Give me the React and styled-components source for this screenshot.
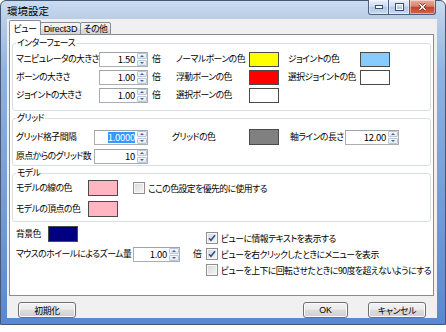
import React from "react";
import styled, { createGlobalStyle } from "styled-components";

const GlobalStyle = createGlobalStyle`
  html, body {
    margin: 0;
    padding: 0;
    background: #ffffff;
  }
  body {
    font-family: "Noto Sans CJK JP", "Noto Sans", sans-serif;
    font-size: 8.8px;
    color: #000;
    font-feature-settings: "palt";
    letter-spacing: -0.5px;
  }
  * {
    box-sizing: border-box;
  }
`;

const Window = styled.div`
  width: 446px;
  height: 325px;
  display: flex;
  flex-direction: column;
  border: 1px solid #44597a;
  border-radius: 6px 6px 0 0;
  padding: 0 8px 6px 6px;
  background: linear-gradient(
    180deg,
    #cadcf0 0px,
    #b9cde6 18px,
    #8fb3e0 70px,
    #5a88d0 100%
  );
`;

const TitleBar = styled.div`
  height: 18px;
  display: flex;
  align-items: center;
`;

const Title = styled.div`
  font-size: 10.5px;
  letter-spacing: 0;
  padding-top: 1px;
`;

const Caption = styled.div`
  display: flex;
  margin-left: auto;
  margin-right: 1px;
  align-self: flex-start;
  margin-top: -1px;
`;

const CapBtn = styled.div`
  width: ${({ $w }) => $w}px;
  height: 15px;
  margin-left: -1px;
  border: 1px solid #4c5f7c;
  border-top: none;
  border-radius: ${({ $r }) => $r};
  display: flex;
  align-items: center;
  justify-content: center;
  background: ${({ $close }) =>
    $close
      ? "linear-gradient(180deg, #eab0a0 0%, #d8826b 45%, #c4432a 50%, #d7634a 100%)"
      : "linear-gradient(180deg, #e9f1fa 0%, #cedcee 45%, #b1c8e4 50%, #c6dbf2 100%)"};
  box-shadow: inset 0 0 0 1px rgba(255, 255, 255, 0.45);
`;

const Client = styled.div`
  flex: 1;
  display: flex;
  flex-direction: column;
  background: #f0f0f0;
  padding: 1px 3px 0 2px;
`;

const TabRow = styled.div`
  display: flex;
  align-items: flex-end;
  height: 15px;
  position: relative;
  z-index: 1;
`;

const Tab = styled.div`
  width: ${({ $w }) => $w}px;
  height: ${({ $active }) => ($active ? 15 : 13)}px;
  margin-left: ${({ $first }) => ($first ? 0 : -1)}px;
  display: flex;
  align-items: center;
  justify-content: center;
  white-space: nowrap;
  border: 1px solid #898c95;
  border-bottom: ${({ $active }) => ($active ? "none" : "1px solid #898c95")};
  border-radius: 2px 2px 0 0;
  background: ${({ $active }) =>
    $active
      ? "#ffffff"
      : "linear-gradient(180deg, #f4f4f4 0%, #ececec 50%, #dedede 51%, #d3d3d3 100%)"};
  font-family: ${({ $latin }) =>
    $latin ? '"Liberation Sans", sans-serif' : "inherit"};
  font-size: ${({ $latin }) => ($latin ? "9px" : "inherit")};
  letter-spacing: ${({ $latin }) => ($latin ? "-0.2px" : "-0.4px")};
`;

const Panel = styled.div`
  margin-top: -1px;
  height: 262px;
  border: 1px solid #898c95;
  background: #ffffff;
  padding: 0 2px;
  display: flex;
  flex-direction: column;
`;

const Group = styled.fieldset`
  margin: ${({ $mt }) => $mt}px 0 0;
  min-width: 0;
  border: 1px solid #d5dfe5;
  border-radius: 3px;
  padding: ${({ $pad }) => $pad};
`;

const Legend = styled.legend`
  padding: 0 1px;
  line-height: 12px;
`;

const Grid = styled.div`
  display: grid;
  grid-template-columns: ${({ $cols }) => $cols};
  grid-auto-rows: 16px;
  row-gap: ${({ $gap }) => $gap}px;
  align-items: center;
`;

const Label = styled.div`
  white-space: nowrap;
  line-height: 16px;
`;

const Unit = styled.div`
  padding-left: ${({ $pl }) => $pl}px;
  line-height: 16px;
`;

const Blank = styled.div``;

const Swatch = styled.div`
  width: 30px;
  height: ${({ $h }) => $h || 15}px;
  border: 1px solid #4a4a4a;
  background: ${({ $color }) => $color};
`;

const SpinBox = styled.div`
  width: ${({ $w }) => $w}px;
  height: 15px;
  display: flex;
  border: 1px solid #abadb3;
  border-top-color: #9fa2a8;
  background: #ffffff;
`;

const SpinValue = styled.div`
  flex: 1;
  display: flex;
  align-items: center;
  justify-content: flex-end;
  padding-right: 1px;
  font-size: 9.5px;
  letter-spacing: -0.3px;
`;

const Selected = styled.span`
  background: #3399ff;
  color: #ffffff;
  line-height: 11px;
`;

const SpinButtons = styled.div`
  width: 11px;
  display: flex;
  flex-direction: column;
  gap: 1px;
  padding: 0 0 0 1px;
`;

const SpinBtn = styled.div`
  flex: 1;
  display: flex;
  align-items: center;
  justify-content: center;
  border: 1px solid #b8c8da;
  border-radius: 1px;
  background: linear-gradient(180deg, #f5f8fc 0%, #e3e9f1 100%);
`;

const Arrow = styled.span`
  width: 0;
  height: 0;
  border-left: 2px solid transparent;
  border-right: 2px solid transparent;
  border-${({ $down }) => ($down ? "top" : "bottom")}: 2px solid #4d6185;
`;

const CheckRow = styled.div`
  display: flex;
  align-items: center;
  gap: 3px;
  height: 16px;
  white-space: nowrap;
`;

const Box = styled.span`
  width: 12px;
  height: 12px;
  flex: none;
  display: flex;
  align-items: center;
  justify-content: center;
  border: 1px solid #8e8f8f;
  background: linear-gradient(135deg, #d9d9d9 0%, #f6f6f6 100%);
  box-shadow: inset 0 0 0 1px #f7f7f7;
`;

const Bottom = styled.div`
  display: flex;
  padding-left: 4px;
  margin-top: 4px;
`;

const LeftCol = styled.div`
  width: 193px;
  display: flex;
  flex-direction: column;
  gap: 4px;
`;

const RightCol = styled.div`
  display: flex;
  flex-direction: column;
  margin-top: 4px;
`;

const Row = styled.div`
  display: flex;
  align-items: center;
  height: 16px;
`;

const FixedLabel = styled(Label)`
  width: ${({ $w }) => $w}px;
`;

const ButtonRow = styled.div`
  display: flex;
  align-items: center;
  padding: 6px 8px 0 9px;
`;

const Button = styled.div`
  width: ${({ $w }) => $w}px;
  height: 16px;
  margin-left: ${({ $ml }) => $ml || 0};
  display: flex;
  align-items: center;
  justify-content: center;
  border: 1px solid #707070;
  border-radius: 3px;
  background: linear-gradient(
    180deg,
    #f2f2f2 0%,
    #ebebeb 45%,
    #dddddd 50%,
    #cfcfcf 100%
  );
  box-shadow: inset 0 0 0 1px #fbfbfb;
  font-family: ${({ $latin }) =>
    $latin ? '"Liberation Sans", sans-serif' : "inherit"};
  letter-spacing: ${({ $latin }) => ($latin ? "0" : "-0.3px")};
`;

const Spin = ({ w, value, selected }) => (
  <SpinBox $w={w}>
    <SpinValue>{selected ? <Selected>{value}</Selected> : value}</SpinValue>
    <SpinButtons>
      <SpinBtn>
        <Arrow />
      </SpinBtn>
      <SpinBtn>
        <Arrow $down />
      </SpinBtn>
    </SpinButtons>
  </SpinBox>
);

const Check = ({ checked, children }) => (
  <CheckRow>
    <Box>
      {checked && (
        <svg width="8" height="8" viewBox="0 0 8 8">
          <path
            d="M1 4.2 L3 6.3 L7 1.2"
            fill="none"
            stroke="#2f4f9e"
            strokeWidth="1.6"
          />
        </svg>
      )}
    </Box>
    {children}
  </CheckRow>
);

const App = () => (
  <>
    <GlobalStyle />
    <Window>
      <TitleBar>
        <Title>環境設定</Title>
        <Caption>
          <CapBtn $w={21} $r="0 0 0 3px">
            <svg width="8" height="4" viewBox="0 0 8 4">
              <rect x="0.5" y="0.5" width="7" height="3" fill="#fff" stroke="#3a4d6a" />
            </svg>
          </CapBtn>
          <CapBtn $w={22} $r="0">
            <svg width="9" height="8" viewBox="0 0 9 8">
              <rect x="0.5" y="0.5" width="8" height="7" fill="none" stroke="#3a4d6a" />
              <rect x="1.5" y="1.5" width="6" height="5" fill="none" stroke="#fff" />
            </svg>
          </CapBtn>
          <CapBtn $w={27} $r="0 0 3px 0" $close>
            <svg width="9" height="8" viewBox="0 0 9 8">
              <path d="M1.5 1 L7.5 7 M7.5 1 L1.5 7" stroke="#5a1e12" strokeWidth="2.6" />
              <path d="M1.5 1 L7.5 7 M7.5 1 L1.5 7" stroke="#fff" strokeWidth="1.5" />
            </svg>
          </CapBtn>
        </Caption>
      </TitleBar>
      <Client>
        <TabRow>
          <Tab $w={32} $active $first>
            ビュー
          </Tab>
          <Tab $w={41} $latin>
            Direct3D
          </Tab>
          <Tab $w={31}>その他</Tab>
        </TabRow>
        <Panel>
          <Group $mt={2} $pad="2px 3px 7px">
            <Legend>インターフェース</Legend>
            <Grid
              $cols="83px 49px 28px 73px 30px 9px 72px 30px"
              $gap={2}
            >
              <Label>マニピュレータの大きさ</Label>
              <Spin w={49} value="1.50" />
              <Unit $pl={4}>倍</Unit>
              <Label>ノーマルボーンの色</Label>
              <Swatch $color="#ffff00" />
              <Blank />
              <Label>ジョイントの色</Label>
              <Swatch $color="#88ccff" />

              <Label>ボーンの大きさ</Label>
              <Spin w={49} value="1.00" />
              <Unit $pl={4}>倍</Unit>
              <Label>浮動ボーンの色</Label>
              <Swatch $color="#ff0000" />
              <Blank />
              <Label>選択ジョイントの色</Label>
              <Swatch $color="#ffffff" />

              <Label>ジョイントの大きさ</Label>
              <Spin w={49} value="1.00" />
              <Unit $pl={4}>倍</Unit>
              <Label>選択ボーンの色</Label>
              <Swatch $color="#ffffff" />
            </Grid>
          </Group>

          <Group $mt={1} $pad="5px 3px 1px">
            <Legend>グリッド</Legend>
            <Grid
              $cols="78px 54px 24px 77px 30px 11px 55px 54px"
              $gap={3}
            >
              <Label>グリッド格子間隔</Label>
              <Spin w={54} value="1.0000" selected />
              <Blank />
              <Label>グリッドの色</Label>
              <Swatch $color="#808080" $h={16} />
              <Blank />
              <Label>軸ラインの長さ</Label>
              <Spin w={54} value="12.00" />

              <Label>原点からのグリッド数</Label>
              <Spin w={54} value="10" />
            </Grid>
          </Group>

          <Group $mt={1} $pad="1px 3px 4px">
            <Legend>モデル</Legend>
            <Grid $cols="72px 30px 15px auto" $gap={5}>
              <Label>モデルの線の色</Label>
              <Swatch $color="#ffb6c1" $h={16} />
              <Blank />
              <Check>ここの色設定を優先的に使用する</Check>

              <Label>モデルの頂点の色</Label>
              <Swatch $color="#ffb6c1" $h={16} />
            </Grid>
          </Group>

          <Bottom>
            <LeftCol>
              <Row>
                <FixedLabel $w={32}>背景色</FixedLabel>
                <Swatch $color="#000080" $h={16} />
              </Row>
              <Row>
                <FixedLabel $w={117}>マウスのホイールによるズーム量</FixedLabel>
                <Spin w={47} value="1.00" />
                <Unit $pl={13}>倍</Unit>
              </Row>
            </LeftCol>
            <RightCol>
              <Check checked>ビューに情報テキストを表示する</Check>
              <Check checked>ビューを右クリックしたときにメニューを表示</Check>
              <Check>ビューを上下に回転させたときに90度を超えないようにする</Check>
            </RightCol>
          </Bottom>
        </Panel>
        <ButtonRow>
          <Button $w={58}>初期化</Button>
          <Button $w={45} $ml="auto" $latin>
            OK
          </Button>
          <Button $w={58} $ml="20px">
            キャンセル
          </Button>
        </ButtonRow>
      </Client>
    </Window>
  </>
);

export default App;
